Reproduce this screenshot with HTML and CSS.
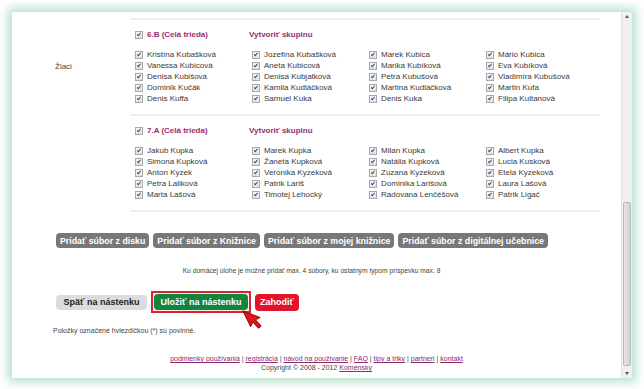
FILE: index.html
```html
<!DOCTYPE html>
<html lang="sk">
<head>
    <meta charset="UTF-8">
    <title>Nový príspevok</title>
    <link rel="stylesheet" href="styles.css">
</head>
<body>
    <div class="window">
        <div class="page">
            <div class="form-row">
                <div class="form-label">Žiaci</div>
                <div class="form-field">
                    <div class="class-group">
                        <div class="group-head">
                            <div class="head-cell"><span class="cb"></span><span class="class-name">6.B (Celá trieda)</span></div>
                            <div class="head-cell"><a class="make-group">Vytvoriť skupinu</a></div>
                        </div>
                        <div class="pupils">
                            <div class="pupil"><span class="cb"></span>Kristína Kubašková</div>
                            <div class="pupil"><span class="cb"></span>Vanessa Kubicová</div>
                            <div class="pupil"><span class="cb"></span>Denisa Kubišová</div>
                            <div class="pupil"><span class="cb"></span>Dominik Kučák</div>
                            <div class="pupil"><span class="cb"></span>Denis Kuffa</div>
                            <div class="pupil"><span class="cb"></span>Jozefína Kubašková</div>
                            <div class="pupil"><span class="cb"></span>Aneta Kubicová</div>
                            <div class="pupil"><span class="cb"></span>Denisa Kubjatková</div>
                            <div class="pupil"><span class="cb"></span>Kamila Kudláčková</div>
                            <div class="pupil"><span class="cb"></span>Samuel Kuka</div>
                            <div class="pupil"><span class="cb"></span>Marek Kubica</div>
                            <div class="pupil"><span class="cb"></span>Marika Kubíková</div>
                            <div class="pupil"><span class="cb"></span>Petra Kubušová</div>
                            <div class="pupil"><span class="cb"></span>Martina Kudláčková</div>
                            <div class="pupil"><span class="cb"></span>Denis Kuka</div>
                            <div class="pupil"><span class="cb"></span>Mário Kubica</div>
                            <div class="pupil"><span class="cb"></span>Eva Kubíková</div>
                            <div class="pupil"><span class="cb"></span>Vladimíra Kubušová</div>
                            <div class="pupil"><span class="cb"></span>Martin Kufa</div>
                            <div class="pupil"><span class="cb"></span>Filipa Kultanová</div>
                        </div>
                    </div>
                    <div class="class-group">
                        <div class="group-head">
                            <div class="head-cell"><span class="cb"></span><span class="class-name">7.A (Celá trieda)</span></div>
                            <div class="head-cell"><a class="make-group">Vytvoriť skupinu</a></div>
                        </div>
                        <div class="pupils">
                            <div class="pupil"><span class="cb"></span>Jakub Kupka</div>
                            <div class="pupil"><span class="cb"></span>Simona Kupková</div>
                            <div class="pupil"><span class="cb"></span>Anton Kyzek</div>
                            <div class="pupil"><span class="cb"></span>Petra Laliková</div>
                            <div class="pupil"><span class="cb"></span>Marta Lašová</div>
                            <div class="pupil"><span class="cb"></span>Marek Kupka</div>
                            <div class="pupil"><span class="cb"></span>Žaneta Kupková</div>
                            <div class="pupil"><span class="cb"></span>Veronika Kyzeková</div>
                            <div class="pupil"><span class="cb"></span>Patrik Lariš</div>
                            <div class="pupil"><span class="cb"></span>Timotej Lehocký</div>
                            <div class="pupil"><span class="cb"></span>Milan Kupka</div>
                            <div class="pupil"><span class="cb"></span>Natália Kupková</div>
                            <div class="pupil"><span class="cb"></span>Zuzana Kyzeková</div>
                            <div class="pupil"><span class="cb"></span>Dominika Larišová</div>
                            <div class="pupil"><span class="cb"></span>Radovana Lenčéšová</div>
                            <div class="pupil"><span class="cb"></span>Albert Kupka</div>
                            <div class="pupil"><span class="cb"></span>Lucia Kusková</div>
                            <div class="pupil"><span class="cb"></span>Etela Kyzeková</div>
                            <div class="pupil"><span class="cb"></span>Laura Lašová</div>
                            <div class="pupil"><span class="cb"></span>Patrik Ligač</div>
                        </div>
                    </div>
                </div>
            </div>

            <div class="file-buttons">
                <button class="file-btn">Pridať súbor z disku</button>
                <button class="file-btn">Pridať súbor z Knižnice</button>
                <button class="file-btn">Pridať súbor z mojej knižnice</button>
                <button class="file-btn">Pridať súbor z digitálnej učebnice</button>
            </div>
            <p class="file-note">Ku domácej úlohe je možné pridať max. 4 súbory, ku ostatným typom príspevku max. 8</p>

            <div class="actions">
                <button class="act-btn back-btn">Späť na nástenku</button>
                <div class="highlight">
                    <button class="act-btn save-btn">Uložiť na nástenku</button>
                    <svg class="cursor" width="20" height="26" viewBox="0 0 20 26">
                        <path d="M2 2 L4.5 19 L8 15.5 L11.5 23 L14.5 21.6 L11 14.2 L16 13.4 Z" fill="#e3161e" stroke="#8a0a0e" stroke-width="1" stroke-linejoin="round"/>
                    </svg>
                </div>
                <button class="act-btn discard-btn">Zahodiť</button>
            </div>
            <p class="required-note">Položky označené hviezdičkou (*) sú povinné.</p>

            <div class="footer">
                <div class="footer-links">
                    <a>podmienky používania</a> | <a>registrácia</a> | <a>návod na používanie</a> | <a>FAQ</a> | <a>tipy a triky</a> | <a>partneri</a> | <a>kontakt</a>
                </div>
                <div class="copyright">Copyright © 2008 - 2012 <a>Komensky</a></div>
            </div>
        </div>

        <div class="scrollbar">
            <div class="sb-arrow sb-up"></div>
            <div class="sb-track"><div class="sb-thumb"></div></div>
            <div class="sb-arrow sb-down"></div>
        </div>
    </div>
</body>
</html>
```

FILE: styles.css
```css
body {
    margin: 0;
    padding: 0;
    background: white;
    font-family: 'Liberation Sans', Arial, sans-serif;
    color: #333;
}

.window {
    margin: 12px;
    width: 620px;
    height: 366px;
    display: flex;
    background: white;
    overflow: hidden;
    box-shadow: 0 0 9px 4px rgba(120, 200, 165, 0.55);
}

.page {
    flex: 1;
    padding-top: 6px;
    overflow: hidden;
}

.form-row {
    display: flex;
}

.form-label {
    width: 75px;
    padding-left: 43px;
    padding-top: 43px;
    font-size: 8px;
    line-height: 11px;
    color: #444;
}

.form-field {
    width: 470px;
    border-bottom: 2px solid #eeeeee;
}

.class-group {
    border-top: 2px solid #eeeeee;
    padding: 9px 0 10px;
}

.group-head {
    display: grid;
    grid-template-columns: repeat(4, 117px);
    height: 11px;
    margin-bottom: 9px;
}

.head-cell {
    display: flex;
    align-items: center;
    padding-left: 5px;
    font-size: 8px;
    font-weight: bold;
}

.head-cell + .head-cell {
    padding-left: 2px;
}

.class-name,
.make-group {
    color: #9b2d6c;
}

.pupils {
    display: grid;
    grid-template-columns: repeat(4, 117px);
    grid-template-rows: repeat(5, 11px);
    grid-auto-flow: column;
}

.pupil {
    display: flex;
    align-items: center;
    padding-left: 5px;
    font-size: 8px;
    color: #3a3a3a;
    white-space: nowrap;
}

.cb {
    position: relative;
    width: 6px;
    height: 6px;
    margin-right: 4px;
    border: 1px solid #a9a9a9;
    background: linear-gradient(#f6f6f6, #e2e2e2);
    flex-shrink: 0;
}

.cb::after {
    content: "";
    position: absolute;
    left: 2px;
    top: 0px;
    width: 1px;
    height: 3px;
    border-right: 1px solid #34457a;
    border-bottom: 1px solid #34457a;
    transform: rotate(40deg);
}

.file-buttons {
    display: flex;
    gap: 4px;
    margin-top: 21px;
    padding-left: 44px;
}

.file-btn {
    height: 15px;
    padding: 0 4px;
    border: none;
    border-radius: 4px;
    background: #787878;
    color: white;
    font-family: 'Liberation Sans', Arial, sans-serif;
    font-size: 8.8px;
    font-weight: bold;
    white-space: nowrap;
}

.file-note {
    margin: 18px 0 0;
    padding-right: 10px;
    text-align: center;
    font-size: 6.7px;
    line-height: 9px;
    color: #444;
}

.actions {
    display: flex;
    align-items: center;
    gap: 4px;
    margin-top: 16px;
    padding-left: 44px;
    height: 22px;
}

.act-btn {
    height: 15px;
    padding: 0 4px;
    border: none;
    border-radius: 4px;
    font-family: 'Liberation Sans', Arial, sans-serif;
    font-size: 9px;
    font-weight: bold;
    white-space: nowrap;
}

.back-btn {
    width: 91px;
    background: #dcdcdc;
    color: #222;
}

.highlight {
    position: relative;
    display: flex;
    padding: 1px;
    border: 2px solid #d3262d;
    background: #fbeaea;
}

.save-btn {
    width: 94px;
    height: 16px;
    background: #12843f;
    color: white;
}

.discard-btn {
    width: 44px;
    height: 17px;
    background: #e3132b;
    color: white;
}

.cursor {
    position: absolute;
    left: 91px;
    top: 13px;
    transform: rotate(-18deg);
}

.required-note {
    margin: 13px 0 0;
    padding-left: 41px;
    font-size: 7px;
    line-height: 9px;
    color: #444;
}

.footer {
    margin-top: 19px;
    text-align: center;
    font-size: 7px;
    line-height: 9px;
    color: #444;
}

.footer a {
    color: #8b2a6e;
    text-decoration: underline;
}

.scrollbar {
    width: 10px;
    display: flex;
    flex-direction: column;
    background: #f0f0f0;
    border-left: 1px solid #e2e2e2;
}

.sb-arrow {
    height: 10px;
    position: relative;
}

.sb-up::after,
.sb-down::after {
    content: "";
    position: absolute;
    left: 3px;
    border-left: 2px solid transparent;
    border-right: 2px solid transparent;
}

.sb-up::after {
    top: 3px;
    border-bottom: 3px solid #555;
}

.sb-down::after {
    top: 4px;
    border-top: 3px solid #555;
}

.sb-track {
    flex: 1;
    display: flex;
    flex-direction: column;
    justify-content: flex-end;
    padding-bottom: 2px;
}

.sb-thumb {
    height: 162px;
    margin: 0 1px;
    border: 1px solid #b8b8b8;
    border-radius: 2px;
    background: linear-gradient(90deg, #e4e4e4, #d2d2d2);
}
```
